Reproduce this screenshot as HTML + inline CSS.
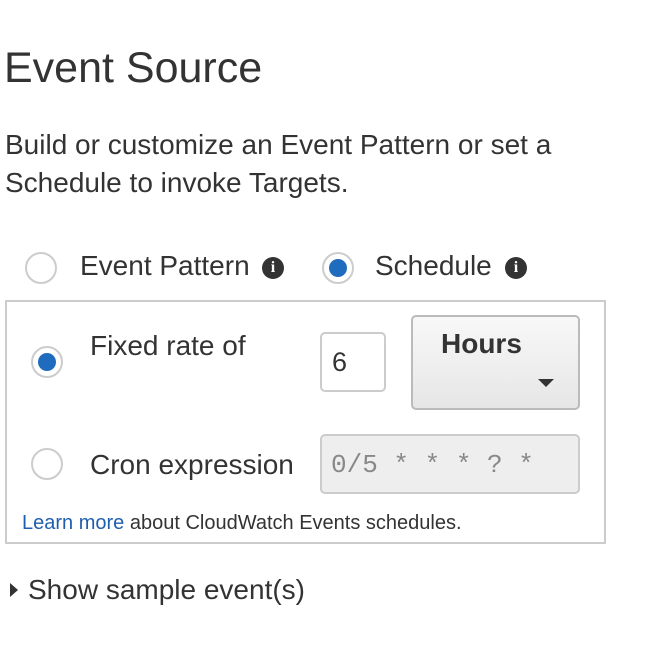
<!DOCTYPE html>
<html><head><style>
body{margin:0;width:650px;height:660px;background:#fff;font-family:"Liberation Sans",sans-serif;color:#333;position:relative;overflow:hidden}
.a{position:absolute;white-space:nowrap}
.r{position:absolute;width:32px;height:32px;border:2px solid #ccc;border-radius:50%;box-sizing:border-box;background:#fff}
.r.on::after{content:"";position:absolute;left:5px;top:5px;width:18px;height:18px;border-radius:50%;background:#1f6cbf}
.i{position:absolute;width:22px;height:22px;border-radius:50%;background:#333;color:#fff;font:bold 16px "Liberation Serif",serif;text-align:center;line-height:22px}
</style></head><body>
<div class="a" style="left:4px;top:44px;font-size:43px;color:#333">Event Source</div>
<div class="a" style="left:5px;top:126px;font-size:28px;line-height:38px">Build or customize an Event Pattern or set a<br>Schedule to invoke Targets.</div>
<div class="r" style="left:25px;top:252px"></div>
<div class="a" style="left:80px;top:250px;font-size:28px">Event Pattern</div>
<div class="i" style="left:262px;top:257px">i</div>
<div class="r on" style="left:322px;top:252px"></div>
<div class="a" style="left:375px;top:250px;font-size:28px">Schedule</div>
<div class="i" style="left:505px;top:257px">i</div>
<div class="a" style="left:5px;top:300px;width:601px;height:244px;border:2px solid #ccc;box-sizing:border-box"></div>
<div class="r on" style="left:31px;top:346px"></div>
<div class="a" style="left:90px;top:330px;font-size:28px">Fixed rate of</div>
<div class="a" style="left:320px;top:332px;width:66px;height:60px;border:2px solid #ccc;border-radius:5px;box-sizing:border-box;font-size:27px;padding:13px 0 0 10px">6</div>
<div class="a" style="left:411px;top:315px;width:169px;height:95px;border:2px solid #bbb;border-radius:5px;box-sizing:border-box;background:linear-gradient(#f8f8f8,#e6e6e6)"></div>
<div class="a" style="left:441px;top:328px;font-size:28px;font-weight:bold">Hours</div>
<div class="a" style="left:538px;top:379px;width:0;height:0;border-left:8px solid transparent;border-right:8px solid transparent;border-top:8px solid #333"></div>
<div class="r" style="left:31px;top:448px"></div>
<div class="a" style="left:90px;top:449px;font-size:28px">Cron expression</div>
<div class="a" style="left:320px;top:434px;width:260px;height:60px;border:2px solid #ccc;border-radius:5px;box-sizing:border-box;background:#eee;font:26px 'Liberation Mono',monospace;color:#888;padding:14px 0 0 9px">0/5 * * * ? *</div>
<div class="a" style="left:22px;top:512px;font-size:20px"><span style="color:#1f5fb0">Learn more</span> about CloudWatch Events schedules.</div>
<div class="a" style="left:10px;top:583px;width:0;height:0;border-top:7px solid transparent;border-bottom:7px solid transparent;border-left:8px solid #333"></div>
<div class="a" style="left:28px;top:574px;font-size:28px">Show sample event(s)</div>
</body></html>
